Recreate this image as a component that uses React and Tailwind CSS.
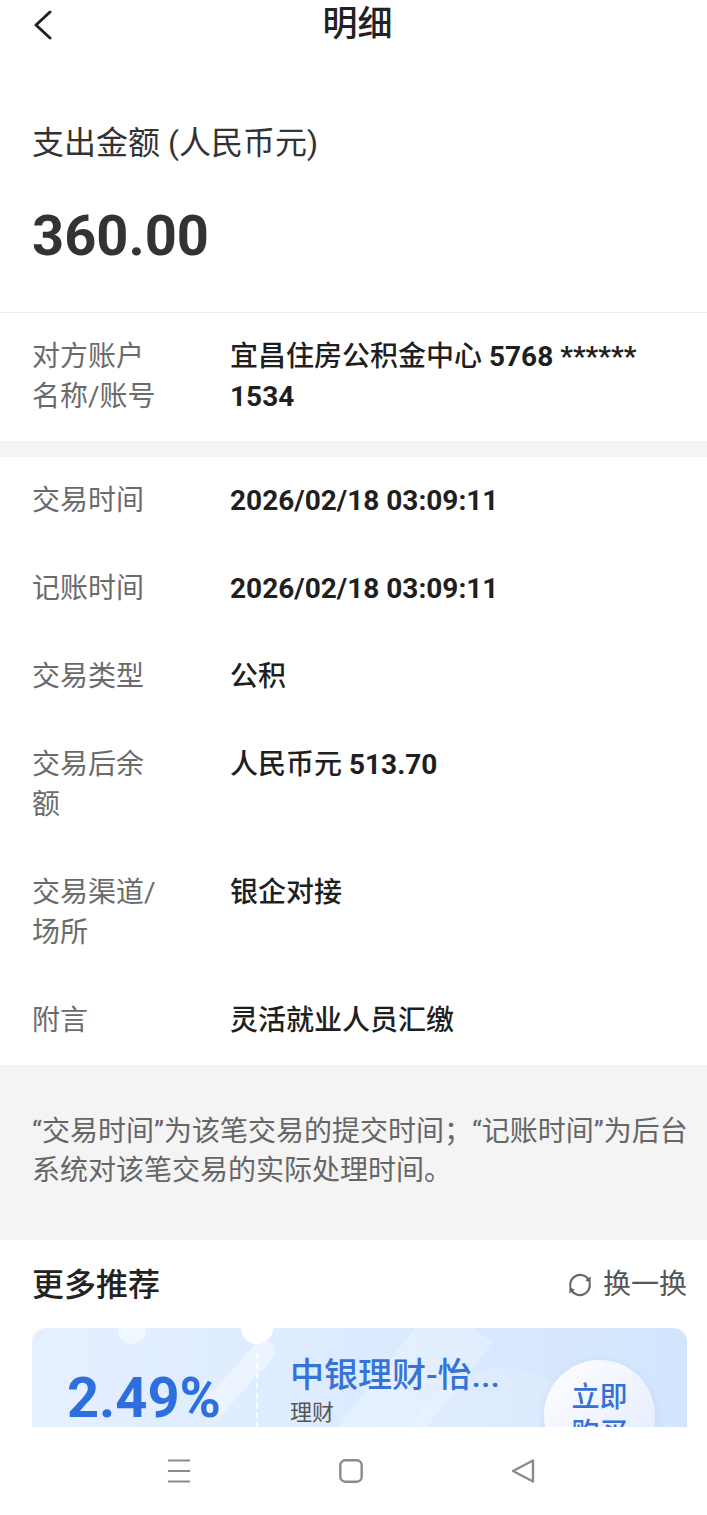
import React from "react";

const font = "font-['Roboto','Noto_Sans_CJK_SC',sans-serif]";

const rows = [
  { label: "交易时间", value: <span className="font-bold">2026/02/18 03:09:11</span> },
  { label: "记账时间", value: <span className="font-bold">2026/02/18 03:09:11</span> },
  { label: "交易类型", value: "公积" },
  {
    label: "交易后余额",
    value: (
      <>
        人民币元 <span className="font-bold">513.70</span>
      </>
    ),
  },
  { label: "交易渠道/场所", value: "银企对接" },
  { label: "附言", value: "灵活就业人员汇缴" },
];

function Row({ label, children }) {
  return (
    <div className="flex py-6 pl-8 pr-4 text-[28px] leading-[40px]">
      <div className="w-[130px] shrink-0 text-[#6b6b6b] break-all">{label}</div>
      <div className="ml-[68px] flex-1 font-medium text-[#1f1f1f]">{children}</div>
    </div>
  );
}

function RefreshIcon() {
  return (
    <svg width="30" height="30" viewBox="0 0 24 24" fill="none">
      <path d="M4.3 13.5A8 8 0 0 1 18.6 7.2" stroke="#666" strokeWidth="1.7" strokeLinecap="round" />
      <path d="M19.7 10.5A8 8 0 0 1 5.4 16.8" stroke="#666" strokeWidth="1.7" strokeLinecap="round" />
      <path d="M20.6 5.2L20.4 10.4L16.2 8.2Z" fill="#666" />
      <path d="M3.4 18.8L3.6 13.6L7.8 15.8Z" fill="#666" />
    </svg>
  );
}

export default function App() {
  return (
    <div className={`${font} w-[707px] h-[1515px] overflow-hidden bg-white flex flex-col`}>
      <div className="h-[1427px] overflow-hidden shrink-0">
        {/* header */}
        <div className="h-[50px] grid grid-cols-[1fr_auto_1fr] items-center">
          <div className="pl-[33px] flex items-center">
            <svg width="20" height="30" viewBox="0 0 20 30" fill="none">
              <path d="M17 2L3 15L17 28" stroke="#222" strokeWidth="3" strokeLinecap="round" strokeLinejoin="round" />
            </svg>
          </div>
          <div className="ml-[8px] text-[35px] font-medium text-[#222] leading-[50px]">明细</div>
          <div />
        </div>

        {/* amount */}
        <div className="pt-[73px] pb-[44px] px-8">
          <div className="text-[32px] leading-[40px] text-[#333]">支出金额 (人民币元)</div>
          <div className="mt-[41px] text-[56px] leading-[64px] font-bold text-[#333]">360.00</div>
        </div>
        <div className="h-px bg-[#ececec]" />

        <div className="py-6 pl-8 pr-8 flex text-[28px] leading-[40px]">
          <div className="w-[130px] shrink-0 text-[#6b6b6b]">对方账户名称/账号</div>
          <div className="ml-[68px] flex-1 font-medium text-[#1f1f1f]">
            宜昌住房公积金中心 <span className="font-bold">5768 ****** 1534</span>
          </div>
        </div>
        <div className="h-4 bg-[#f4f4f4]" />

        <div>
          {rows.map((r) => (
            <Row key={r.label} label={r.label}>
              {r.value}
            </Row>
          ))}
        </div>

        {/* note */}
        <div className="bg-[#f4f4f4] pt-[47px] pb-[50px] pl-8 pr-3 text-[28px] leading-[39px] text-[#666]">
          “交易时间”为该笔交易的提交时间；“记账时间”为后台系统对该笔交易的实际处理时间。
        </div>

        {/* recommend */}
        <div className="pt-[25px] pl-8 pr-5">
          <div className="flex items-center justify-between h-[40px]">
            <div className="text-[32px] font-medium text-[#222]">更多推荐</div>
            <div className="flex items-center gap-[8px] text-[28px] text-[#555]">
              <RefreshIcon />
              <span>换一换</span>
            </div>
          </div>

          <div className="relative mt-[23px] h-[170px] rounded-[14px] bg-linear-to-r from-[#e5f0ff] via-[#dcebff] to-[#d3e5fd] flex">
            <div className="absolute inset-0 overflow-hidden rounded-[14px]">
              <div className="absolute left-[86px] -top-[12px] w-[28px] h-[28px] rounded-full bg-white/50" />
              <div className="absolute left-[195px] top-[2px] w-[22px] h-[100px] rounded-full bg-white/40 rotate-[42deg]" />
              <div className="absolute left-[330px] -top-[30px] w-[70px] h-[220px] bg-white/25 rotate-[38deg]" />
              <div className="absolute left-[370px] top-[40px] w-[200px] h-[200px] rounded-full bg-white/15" />
            </div>
            <div className="absolute left-[209px] -top-[16px] w-8 h-8 rounded-full bg-white" />

            <div className="relative w-[224px] shrink-0 flex justify-center pt-[40px]">
              <div className="text-[56px] leading-[60px] font-bold text-[#2e6fdf]">2.49%</div>
            </div>
            <div className="relative w-0 mt-[25px] border-l-2 border-dashed border-white/90" />
            <div className="relative flex-1 flex justify-between pl-[32px]">
              <div className="pt-[27px]">
                <div className="text-[34px] leading-[40px] font-medium text-[#3573d9]">中银理财-怡...</div>
                <div className="mt-1 text-[22px] leading-[28px] text-[#555]">理财</div>
              </div>
              <div className="mr-[32px] mt-[32px] w-[111px] h-[111px] shrink-0 rounded-full bg-linear-to-br from-white to-[#e3e9fc] shadow-[0_2px_8px_rgba(120,150,220,0.2)] flex items-center justify-center">
                <div className="w-[58px] text-[28px] leading-[36px] font-medium text-[#3470d8] text-center">立即购买</div>
              </div>
            </div>
          </div>
        </div>
      </div>

      {/* nav bar */}
      <div className="h-[88px] shrink-0 bg-white flex items-center pl-[167px] gap-[148px]">
        <svg width="24" height="24" viewBox="0 0 24 24" fill="none">
          <path d="M1 1.5H23M1 12H23M1 22.5H23" stroke="#8a8a8a" strokeWidth="2.2" />
        </svg>
        <svg width="24" height="24" viewBox="0 0 24 24" fill="none">
          <rect x="1.3" y="1.3" width="21.4" height="21.4" rx="5" stroke="#8a8a8a" strokeWidth="2.4" />
        </svg>
        <svg width="24" height="24" viewBox="0 0 24 24" fill="none">
          <path d="M22 1.5L2 12L22 22.5Z" stroke="#8a8a8a" strokeWidth="2.4" strokeLinejoin="round" />
        </svg>
      </div>
    </div>
  );
}
